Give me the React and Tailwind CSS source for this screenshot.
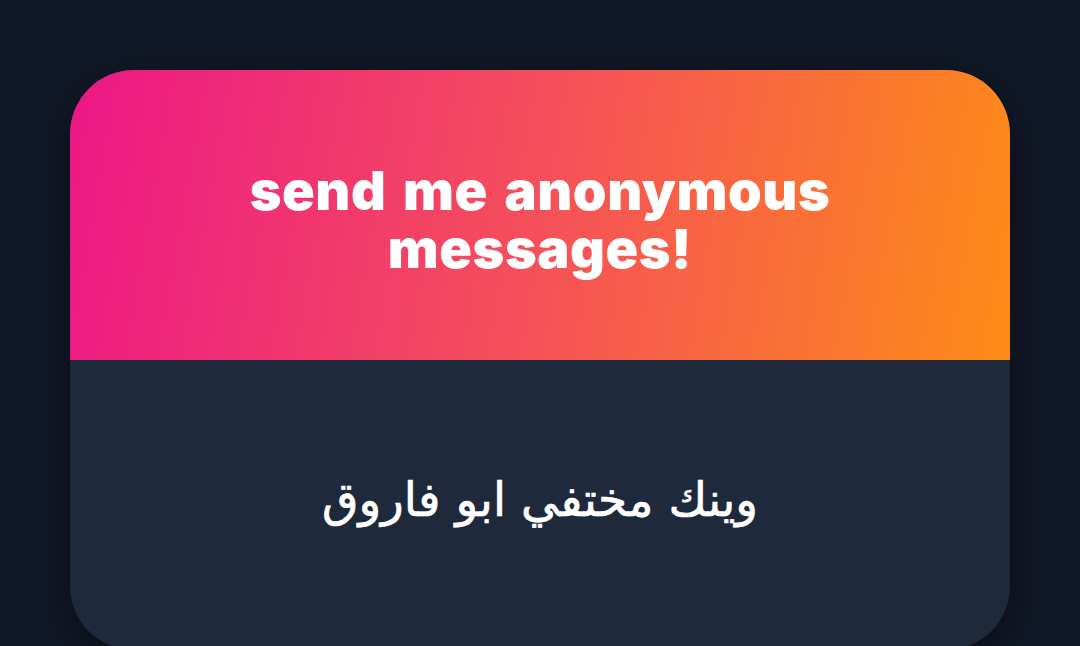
import React from 'react';

const App = () => {
  return (
    <div className="w-[1080px] h-[646px] overflow-hidden bg-[#111827] pt-[70px] px-[70px]">
      <div className="h-[580px] rounded-[64px] overflow-hidden bg-[#1e293b] shadow-[0_10px_40px_rgba(0,0,0,0.45)] flex flex-col">
        {/* Gradient header */}
        <div className="h-[290px] shrink-0 bg-linear-[100deg] from-[#ec1787] via-[#f5505a] to-[#fe8c16] flex items-center justify-center pt-[10px]">
          <h1 className="text-white text-center font-black text-[54px] leading-[58px] tracking-[0.01em] [word-spacing:0.1em] font-['Inter','Liberation_Sans',sans-serif] w-[700px]">
            send me anonymous messages!
          </h1>
        </div>

        {/* Message body */}
        <div className="flex-1 flex items-center justify-center pb-[10px]">
          <p dir="rtl" className="text-white text-[47px] [-webkit-text-stroke:0.7px_white] font-['DejaVu_Sans','Noto_Sans',sans-serif]">
            وينك مختفي ابو فاروق
          </p>
        </div>
      </div>
    </div>
  );
};

export default App;
